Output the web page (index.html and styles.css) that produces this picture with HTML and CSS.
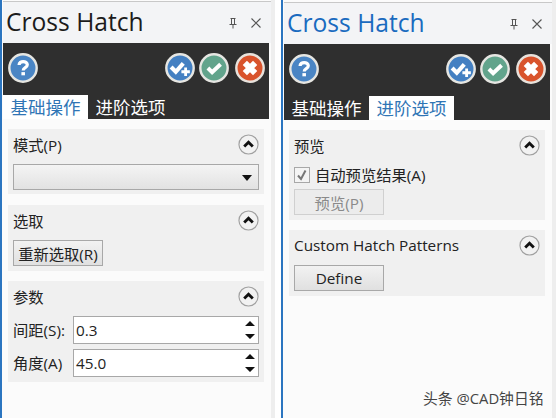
FILE: index.html
```html
<!DOCTYPE html>
<html lang="en">
<head>
    <meta charset="UTF-8">
    <title>Cross Hatch</title>
    <link rel="stylesheet" href="styles.css">
</head>
<body>
    <svg class="defs" width="0" height="0">
        <symbol id="collapse" viewBox="0 0 22 22">
            <circle cx="11" cy="11" r="10" fill="#f2f2f2" stroke="#a0a0a0" stroke-width="1.2"/>
            <path d="M6.5 13.2 L11 8.7 L15.5 13.2" fill="none" stroke="#111" stroke-width="3"/>
        </symbol>
        <symbol id="pin" viewBox="0 0 12 12">
            <path d="M3.5 1.5 H8.5 M4.5 1.5 V7.5 M7.5 1.5 V7.5 M2.5 7.5 H9.5 M6 7.5 V11.5" fill="none" stroke="#555" stroke-width="1"/>
        </symbol>
        <symbol id="close" viewBox="0 0 12 12">
            <path d="M1.5 1.5 L10.5 10.5 M10.5 1.5 L1.5 10.5" fill="none" stroke="#555" stroke-width="1.1"/>
        </symbol>
        <symbol id="check" viewBox="0 0 32 32">
            <circle cx="16" cy="16" r="14.6" fill="#62a48c" stroke="#e6e6e2" stroke-width="2.6"/>
            <path d="M9.5 16 L14 20.5 L23 12" fill="none" stroke="#fff" stroke-width="4.2"/>
        </symbol>
        <symbol id="apply" viewBox="0 0 32 32">
            <circle cx="16" cy="16" r="14.6" fill="#4480c2" stroke="#e6e6e2" stroke-width="2.6"/>
            <path d="M6.5 15 L11.5 20 L19.5 11" fill="none" stroke="#fff" stroke-width="4.4"/>
            <path d="M22 15.5 V24.5 M17.5 20 H26.5" fill="none" stroke="#fff" stroke-width="3"/>
        </symbol>
        <symbol id="cancel" viewBox="0 0 32 32">
            <circle cx="16" cy="16" r="14.6" fill="#d9532c" stroke="#e8e2dc" stroke-width="2.6"/>
            <path d="M10.5 10.5 L21.5 21.5 M21.5 10.5 L10.5 21.5" fill="none" stroke="#fff" stroke-width="6.4"/>
        </symbol>
        <symbol id="help" viewBox="0 0 32 32">
            <circle cx="16" cy="16" r="14.6" fill="#4a85c4" stroke="#e6e6e2" stroke-width="2.6"/>
            <path d="M11.8 12.8 C11.8 7.8 20.6 8 20.6 12.6 C20.6 15.8 16.2 15.4 16.2 18.6" fill="none" stroke="#fff" stroke-width="3.4"/>
            <rect x="14.3" y="20.4" width="3.8" height="3.4" fill="#fff"/>
        </symbol>
        <symbol id="spin" viewBox="0 0 10 24">
            <path d="M5 3 L10 8 H0 Z M0 16 H10 L5 21 Z" fill="#111"/>
        </symbol>
    </svg>

    <div class="screen">
        <!-- Left panel -->
        <div class="panel">
            <div class="title-row">
                <h1 class="title">Cross Hatch</h1>
                <svg class="win-icon"><use href="#pin"/></svg>
                <svg class="win-icon"><use href="#close"/></svg>
            </div>
            <div class="toolbar">
                <div class="tool-row">
                    <svg class="round-btn"><use href="#help"/></svg>
                    <span class="spacer"></span>
                    <svg class="round-btn"><use href="#apply"/></svg>
                    <svg class="round-btn"><use href="#check"/></svg>
                    <svg class="round-btn last"><use href="#cancel"/></svg>
                </div>
                <div class="tabs">
                    <span class="tab active">基础操作</span>
                    <span class="tab">进阶选项</span>
                </div>
            </div>
            <div class="sections">
                <section class="group tight">
                    <div class="group-head"><span>模式(P)</span><svg class="collapse"><use href="#collapse"/></svg></div>
                    <div class="select"><svg class="select-arrow" viewBox="0 0 10 6"><path d="M0 0 H10 L5 6 Z" fill="#111"/></svg></div>
                </section>
                <section class="group">
                    <div class="group-head"><span>选取</span><svg class="collapse"><use href="#collapse"/></svg></div>
                    <button class="btn spaced">重新选取(R)</button>
                </section>
                <section class="group">
                    <div class="group-head"><span>参数</span><svg class="collapse"><use href="#collapse"/></svg></div>
                    <div class="field">
                        <label>间距(S):</label>
                        <div class="spin-input"><span>0.3</span><svg class="spin"><use href="#spin"/></svg></div>
                    </div>
                    <div class="field">
                        <label>角度(A)</label>
                        <div class="spin-input"><span>45.0</span><svg class="spin"><use href="#spin"/></svg></div>
                    </div>
                </section>
            </div>
        </div>

        <!-- Right panel -->
        <div class="panel lower">
            <div class="title-row">
                <h1 class="title blue">Cross Hatch</h1>
                <svg class="win-icon"><use href="#pin"/></svg>
                <svg class="win-icon"><use href="#close"/></svg>
            </div>
            <div class="toolbar">
                <div class="tool-row">
                    <svg class="round-btn"><use href="#help"/></svg>
                    <span class="spacer"></span>
                    <svg class="round-btn"><use href="#apply"/></svg>
                    <svg class="round-btn"><use href="#check"/></svg>
                    <svg class="round-btn last"><use href="#cancel"/></svg>
                </div>
                <div class="tabs">
                    <span class="tab">基础操作</span>
                    <span class="tab active">进阶选项</span>
                </div>
            </div>
            <div class="sections">
                <section class="group">
                    <div class="group-head"><span>预览</span><svg class="collapse"><use href="#collapse"/></svg></div>
                    <div class="check-row">
                        <span class="checkbox"><svg viewBox="0 0 14 14"><path d="M3 7.5 L6 11 L10.5 2.5" fill="none" stroke="#777" stroke-width="2"/></svg></span>
                        <span class="check-label">自动预览结果(A)</span>
                    </div>
                    <button class="btn disabled">预览(P)</button>
                </section>
                <section class="group">
                    <div class="group-head"><span>Custom Hatch Patterns</span><svg class="collapse"><use href="#collapse"/></svg></div>
                    <button class="btn spaced">Define</button>
                </section>
            </div>
            <div class="watermark">头条 @CAD钟日铭</div>
        </div>
    </div>
</body>
</html>
```

FILE: styles.css
```css
* {
    margin: 0;
    padding: 0;
    box-sizing: border-box;
}

body {
    width: 556px;
    height: 418px;
    overflow: hidden;
    background: white;
    font-family: 'Open Sans', 'Noto Sans CJK SC', sans-serif;
    color: #222;
}

.defs {
    position: absolute;
}

.screen {
    display: flex;
    gap: 6px;
    height: 418px;
}

.panel {
    position: relative;
    width: 275px;
    background: #fbfbfb;
    border-left: 2px solid #2b75c0;
    border-right: 4px solid #eeeeee;
    padding: 1px 0 0 1px;
}

.panel.lower {
    padding-top: 2px;
}

.title-row {
    display: flex;
    align-items: center;
    height: 42px;
    padding-right: 9px;
    border-top: 1px solid #c8c8c8;
    background: #f3f4f6;
}

.title {
    flex: 1;
    padding: 0 0 2px 3px;
    font-size: 24.6px;
    font-weight: 400;
    color: #1c1c1c;
}

.title.blue {
    color: #1a6bbf;
}

.win-icon {
    width: 12px;
    height: 12px;
    margin-left: 11px;
}

.toolbar {
    width: 266px;
    height: 76px;
    background: #2f2f2f;
}

.tool-row {
    display: flex;
    align-items: center;
    gap: 4px;
    height: 52px;
    padding: 0 4px 2px 5px;
}

.spacer {
    flex: 1;
}

.round-btn {
    width: 30px;
    height: 30px;
}

.round-btn.last {
    margin-left: 2px;
}

.tabs {
    display: flex;
    height: 24px;
}

.tab {
    padding: 0 7.5px;
    font-size: 17.5px;
    line-height: 24px;
    color: white;
}

.tab.active {
    background: white;
    color: #2f75b5;
}

.sections {
    width: 266px;
    padding: 10px 5px 0;
}

.group {
    margin-bottom: 10px;
    padding: 0 5px 5px;
    background: #f0f0f0;
}

.group.tight {
    margin-bottom: 11px;
    padding-bottom: 4px;
}

.group-head {
    display: flex;
    align-items: center;
    justify-content: space-between;
    height: 31px;
    font-size: 15.3px;
}

.group-head span {
    padding-bottom: 2px;
}

.collapse {
    width: 21px;
    height: 21px;
}

.select {
    display: flex;
    align-items: center;
    justify-content: flex-end;
    height: 26px;
    margin-top: 4px;
    padding: 1px 6px 0 0;
    border: 1px solid #a8a8a8;
    background: linear-gradient(#f4f4f4, #e2e2e2);
}

.select-arrow {
    width: 10px;
    height: 6px;
}

.btn {
    display: block;
    width: 90px;
    height: 26px;
    border: 1px solid #a8a8a8;
    background: linear-gradient(#f2f2f2, #e0e0e0);
    font-family: inherit;
    font-size: 15.3px;
    color: #222;
}

.btn.spaced {
    margin-top: 4px;
}

.btn.disabled {
    border-color: #d0d0d0;
    background: #ececec;
    color: #8a8a8a;
}

.field {
    display: flex;
    align-items: center;
    justify-content: space-between;
    margin-top: 5px;
    font-size: 15.3px;
}

.field label {
    padding-bottom: 2px;
}

.group-head + .field {
    margin-top: 4px;
}

.spin-input {
    display: flex;
    align-items: center;
    justify-content: space-between;
    width: 186px;
    height: 28px;
    padding: 0 3px 0 2px;
    border: 1px solid #a8a8a8;
    background: white;
}

.spin {
    width: 10px;
    height: 24px;
}

.check-row {
    display: flex;
    align-items: center;
    gap: 5px;
    height: 28px;
    font-size: 15.3px;
}

.check-label {
    padding-bottom: 2px;
}

.checkbox {
    width: 16px;
    height: 16px;
    border: 1px solid #a8a8a8;
    background: #f4f4f4;
}

.checkbox svg {
    display: block;
}

.watermark {
    position: absolute;
    left: 140px;
    bottom: 10px;
    font-size: 14.8px;
    color: #444;
}
```
